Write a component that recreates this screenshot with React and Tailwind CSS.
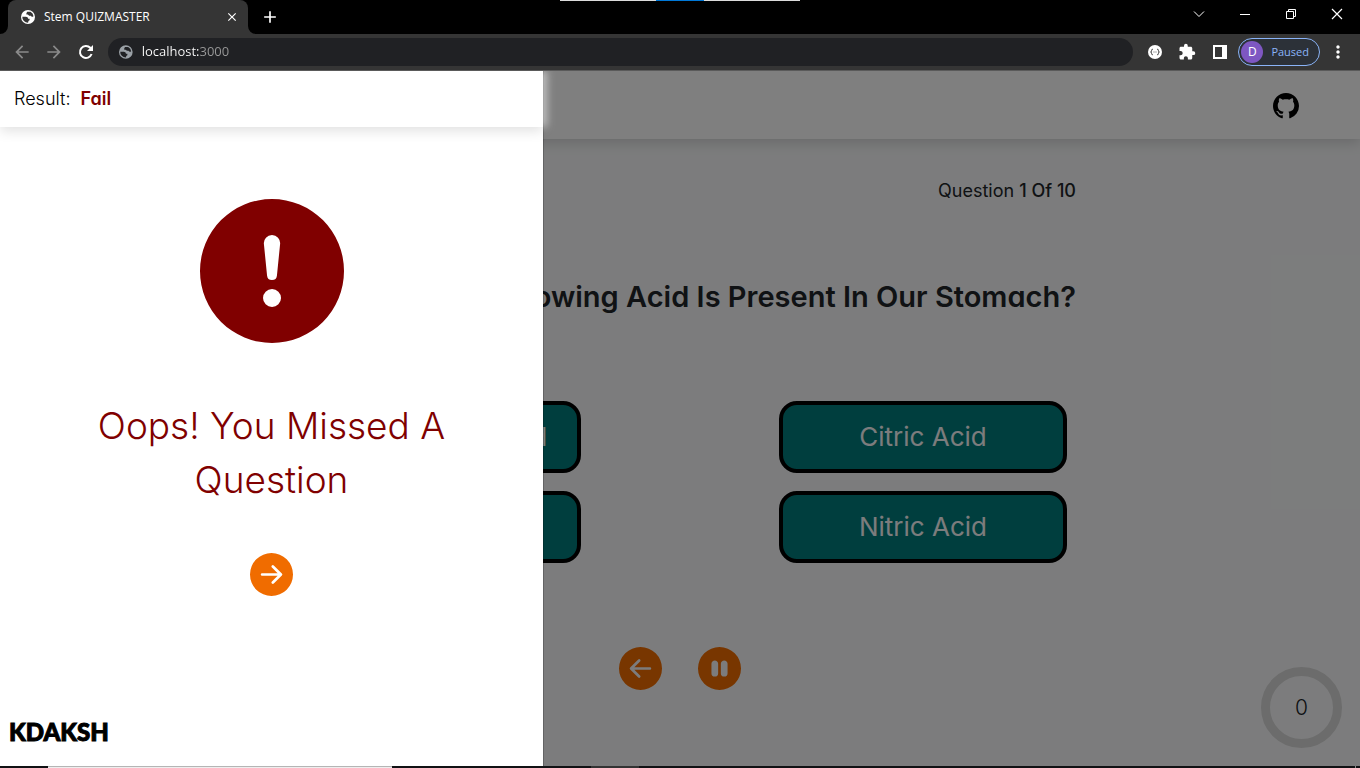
import React from "react";
import {
  BsExclamationCircleFill,
  BsArrowRightCircleFill,
  BsArrowLeftCircleFill,
  BsPauseCircleFill,
  BsGithub,
} from "react-icons/bs";
import {
  MdExtension,
  MdMoreVert,
  MdArrowBack,
  MdArrowForward,
  MdClose,
  MdAdd,
} from "react-icons/md";

function Globe({ className }) {
  return (
    <svg className={className} viewBox="0 0 16 16" aria-hidden="true">
      <path
        fill="currentColor"
        fillRule="evenodd"
        d="M8 1a7 7 0 1 0 0 14A7 7 0 0 0 8 1zM7.200 2.800h3.200a5.700 5.700 0 0 1 3.100 4.400c-.9.900-2.300.6-2.700-.5L9.200 6.800 7.800 5.600H6.400V4.200zM2.300 7.700h3.600c1.300 0 2.200.9 2.200 2h1.500v1.500c-.9.300-1.400.9-1.500 2.500a5.700 5.700 0 0 1-5.800-6z"
      />
    </svg>
  );
}

function TitleBar() {
  return (
    <div className="relative flex h-[34px] items-stretch bg-black text-white">
      <div className="absolute inset-x-0 top-0 flex h-px justify-center">
        <span className="w-24 bg-[#dcdcdc]" />
        <span className="w-12 bg-[#0078d7]" />
        <span className="w-24 bg-[#dcdcdc]" />
      </div>
      <div className="flex w-2 items-end">
        <svg className="size-2 text-[#353535]" viewBox="0 0 8 8" aria-hidden="true">
          <path d="M8 0v8H0a8 8 0 0 0 8-8z" fill="currentColor" />
        </svg>
      </div>
      <div className="flex w-60 items-center gap-2 rounded-t-lg bg-[#353535] pl-3 pr-2">
        <Globe className="size-4" />
        <span className="flex-1 font-['Open_Sans',sans-serif] text-xs">Stem QUIZMASTER</span>
        <button type="button" aria-label="Close tab" className="grid size-4 place-items-center">
          <MdClose className="size-3.5" />
        </button>
      </div>
      <div className="flex w-2 items-end">
        <svg className="size-2 text-[#353535]" viewBox="0 0 8 8" aria-hidden="true">
          <path d="M0 0v8h8a8 8 0 0 1-8-8z" fill="currentColor" />
        </svg>
      </div>
      <button type="button" aria-label="New tab" className="grid w-7 place-items-center">
        <MdAdd className="size-5" />
      </button>
      <div className="ml-auto flex items-start">
        <button type="button" aria-label="Search tabs" className="grid h-7 w-[46px] place-items-center">
          <svg className="size-3" viewBox="0 0 12 12" fill="none" stroke="currentColor" aria-hidden="true">
            <path d="M1 3.5l5 5 5-5" />
          </svg>
        </button>
        <button type="button" aria-label="Minimize" className="grid h-7 w-[46px] place-items-center">
          <svg className="size-3" viewBox="0 0 12 12" fill="none" stroke="currentColor" aria-hidden="true">
            <path d="M1 6.5h10" />
          </svg>
        </button>
        <button type="button" aria-label="Restore" className="grid h-7 w-[46px] place-items-center">
          <svg className="size-3" viewBox="0 0 12 12" fill="none" stroke="currentColor" aria-hidden="true">
            <path d="M1.500 3.500h7v7h-7zM3.500 3.500v-2h7v7h-2" />
          </svg>
        </button>
        <button type="button" aria-label="Close" className="grid h-7 w-[46px] place-items-center">
          <svg className="size-3" viewBox="0 0 12 12" fill="none" stroke="currentColor" strokeWidth="1.2" aria-hidden="true">
            <path d="M1 1l10 10M11 1L1 11" />
          </svg>
        </button>
      </div>
    </div>
  );
}

function Toolbar() {
  return (
    <div className="flex h-[37px] items-center border-b border-[#5a5a5a] bg-[#353535] pr-3 text-white">
      <div className="flex w-[108px] items-center gap-3 pl-3">
        <button type="button" aria-label="Back" className="text-[#8a8a8a]">
          <MdArrowBack className="size-5" />
        </button>
        <button type="button" aria-label="Forward" className="text-[#8a8a8a]">
          <MdArrowForward className="size-5" />
        </button>
        <button type="button" aria-label="Reload">
          <svg className="size-5" viewBox="0 0 20 20" fill="none" aria-hidden="true">
            <path d="M15.600 12a6 6 0 1 1-1.300-6.200l1 1" stroke="currentColor" strokeWidth="2" />
            <path d="M17 3v6h-6z" fill="currentColor" />
          </svg>
        </button>
      </div>
      <div className="flex h-7 flex-1 items-center gap-2 rounded-full bg-[#202124] px-2.5">
        <Globe className="size-4 text-[#9aa0a6]" />
        <input
          type="text"
          aria-label="Address"
          defaultValue="localhost:3000"
          className="w-full bg-[linear-gradient(to_right,#ffffff_58px,#9a9a9a_58px)] bg-clip-text font-['Open_Sans',sans-serif] text-[13px] text-transparent outline-none"
        />
      </div>
      <div className="flex items-center gap-[13px] pl-3">
        <button type="button" aria-label="JSON viewer">
          <svg className="size-5" viewBox="0 0 20 20" fill="none" aria-hidden="true">
            <circle cx="10" cy="10" r="7" fill="#fff" />
            <path
              d="M7.800 7.200q-1.300 0-1.200 1.300t-1 1.500q1.100.2 1 1.500t1.200 1.300M12.200 7.200q1.300 0 1.200 1.300t1 1.500q-1.100.2-1 1.500t-1.200 1.300M8.600 10h.8M10.600 10h.8"
              stroke="#353535"
            />
          </svg>
        </button>
        <button type="button" aria-label="Extensions">
          <MdExtension className="size-[18px]" />
        </button>
        <button type="button" aria-label="Side panel" className="px-1">
          <svg className="size-3.5" viewBox="0 0 14 14" aria-hidden="true">
            <path d="M0 0h14v14H0zM2 2v10h7V2z" fill="currentColor" fillRule="evenodd" />
          </svg>
        </button>
      </div>
      <button
        type="button"
        className="ml-[7px] flex h-7 items-center gap-2 rounded-full border border-[#8ab4f8] bg-[#2c3138] pl-0.5 pr-2.5 font-['Open_Sans',sans-serif] text-[11px] text-[#8ab4f8]"
      >
        <span className="grid size-[22px] place-items-center rounded-full bg-[#7e57c2] text-xs text-white">D</span>
        Paused
      </button>
      <button type="button" aria-label="Menu" className="ml-2">
        <MdMoreVert className="size-5" />
      </button>
    </div>
  );
}

function Option({ children }) {
  return (
    <button
      type="button"
      className="h-[72px] w-72 rounded-[18px] border-4 border-black bg-[#007c7c] pb-0.5 text-[26px] text-[#f8f9fa]"
    >
      {children}
    </button>
  );
}

function Quiz() {
  return (
    <div className="flex flex-1 flex-col">
      <header className="flex h-[68px] items-center justify-end bg-white pr-[61px] pt-0.5 shadow-[0_4px_12px_rgba(0,0,0,0.15)]">
        <a href="#github" aria-label="GitHub">
          <BsGithub className="size-[26px] text-black" />
        </a>
      </header>
      <main className="mx-auto flex w-full max-w-[792px] flex-1 flex-col pt-9">
        <p className="text-right text-lg leading-8">
          Question <b className="font-medium">1 Of 10</b>
        </p>
        <h1 className="mt-[68px] flex justify-end whitespace-nowrap text-[29px] font-semibold leading-[44px]">
          Which Of The Following Acid Is Present In Our Stomach?
        </h1>
        <div className="mt-[82px] grid grid-cols-2 justify-between gap-y-[18px] px-[9px]">
          <Option>Hydrochloric Acid</Option>
          <div className="flex justify-end">
            <Option>Citric Acid</Option>
          </div>
          <Option>Sulphuric Acid</Option>
          <div className="flex justify-end">
            <Option>Nitric Acid</Option>
          </div>
        </div>
        <div className="mt-[84px] flex justify-center gap-9 text-[#f06c00]">
          <button type="button" aria-label="Previous question" className="rounded-full bg-[radial-gradient(#f8f9fa_60%,transparent_60%)]">
            <BsArrowLeftCircleFill className="size-[43px]" />
          </button>
          <button type="button" aria-label="Pause" className="rounded-full bg-[radial-gradient(#f8f9fa_60%,transparent_60%)]">
            <BsPauseCircleFill className="size-[43px]" />
          </button>
        </div>
      </main>
      <div className="absolute bottom-[18px] right-[18px] grid size-[81px] place-items-center rounded-full border-[9px] border-[#d8d8d8] text-[21px] font-light">
        0
      </div>
    </div>
  );
}

function ResultDrawer() {
  return (
    <aside
      aria-label="Result"
      className="absolute inset-y-0 left-0 flex w-2/5 flex-col border-r border-black/20 bg-white bg-clip-padding text-black"
    >
      <div className="flex h-14 items-center gap-2.5 px-3.5 text-lg shadow-[0_4px_12px_rgba(0,0,0,0.12),4px_0_8px_rgba(255,255,255,0.6)]">
        <span className="font-light">Result:</span>
        <b className="font-semibold text-[#800000]">Fail</b>
      </div>
      <div className="flex flex-1 flex-col items-center px-[72px] pt-[72px] text-[#800000]">
        <BsExclamationCircleFill className="size-36" />
        <h2 className="mt-14 text-center text-[37px] font-light leading-[54px]">Oops! You Missed A Question</h2>
        <button type="button" aria-label="Next question" className="mt-[46px] text-[#f06c00]">
          <BsArrowRightCircleFill className="size-[43px]" />
        </button>
      </div>
      <div className="px-[9px] pb-[18px] font-['Lato',sans-serif] text-2xl font-black leading-8 [-webkit-text-stroke:1px_black]">
        KDAKSH
      </div>
    </aside>
  );
}

function TaskbarEdge() {
  return (
    <div className="flex h-0.5 bg-[#111214]">
      <span className="ml-12 w-[344px] border-t border-[#b5b5b5] bg-[#eeeeee]" />
      <span className="ml-[199px] w-12 bg-[#333333]" />
      <span className="ml-auto mr-1 w-px bg-[#8a8a8a]" />
    </div>
  );
}

export default function App() {
  return (
    <div className="flex min-h-screen flex-col font-['Inter',sans-serif] text-[#212529] [font-feature-settings:'cv11']">
      <TitleBar />
      <Toolbar />
      <div className="relative flex flex-1 flex-col overflow-hidden bg-[#f8f9fa]">
        <Quiz />
        <div className="absolute inset-0 bg-black/50" />
        <ResultDrawer />
      </div>
      <TaskbarEdge />
    </div>
  );
}
